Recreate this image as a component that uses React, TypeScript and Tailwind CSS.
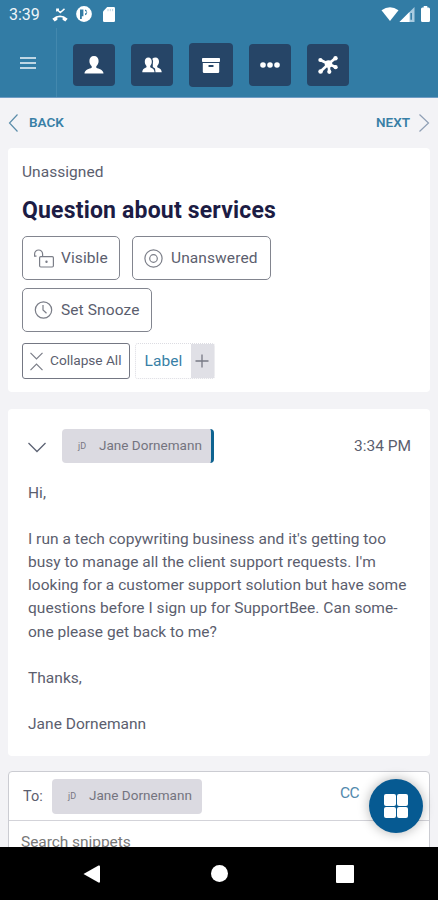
import type { ReactNode } from 'react';

const toolbar: { key: string; className: string; icon: ReactNode }[] = [
  { key: 'user', className: 'h-[42px] w-[42px]', icon: <UserIcon /> },
  { key: 'groups', className: 'h-[42px] w-[42px]', icon: <GroupIcon /> },
  { key: 'archive', className: 'h-11 w-11', icon: <ArchiveIcon /> },
  { key: 'more', className: 'h-[42px] w-[42px]', icon: <MoreIcon /> },
  { key: 'hub', className: 'h-[42px] w-[42px]', icon: <HubIcon /> },
];

const message = [
  'Hi,',
  '',
  "I run a tech copywriting business and it's getting too",
  "busy to manage all the client support requests. I'm",
  'looking for a customer support solution but have some',
  'questions before I sign up for SupportBee. Can some-',
  'one please get back to me?',
  '',
  'Thanks,',
  '',
  'Jane Dornemann',
];

export default function App() {
  return (
    <div className="flex h-[900px] w-[438px] flex-col overflow-hidden bg-[#f3f3f6] font-[Roboto,sans-serif] text-[#5b5e6e]">
      <header className="h-[98px] shrink-0 border-b border-[#6f9cc4] bg-[#327ca5]">
        <StatusBar />
        <div className="flex h-[69px]">
          <button className="flex w-[57px] items-center justify-center border-r border-[#4388ae]">
            <svg width="16" height="14" viewBox="0 0 16 14" className="mt-px" fill="none" stroke="#bfd6e4" strokeWidth="2">
              <path d="M0 2H16M0 7H16M0 12H16" />
            </svg>
          </button>
          <div className="flex items-center gap-4 pt-[5px] pl-4">
            {toolbar.map(item => (
              <button key={item.key} className={`flex items-center justify-center rounded-[4px] bg-[#264567] ${item.className}`}>
                {item.icon}
              </button>
            ))}
          </div>
        </div>
      </header>

      <main className="flex min-h-0 flex-1 flex-col overflow-hidden">
        <nav className="flex h-[50px] shrink-0 items-center justify-between px-2 text-[13.5px] font-semibold text-[#387fa6]">
          <button className="flex items-center gap-[10px]">
            <svg width="11" height="20" viewBox="0 0 11 20" fill="none" stroke="#5b8daa" strokeWidth="1.2">
              <path d="M9.5 1.5L1.5 10L9.5 18.5" />
            </svg>
            <span className="pb-[2px]">BACK</span>
          </button>
          <button className="flex items-center gap-[8px]">
            <span className="pb-[2px]">NEXT</span>
            <svg width="12" height="20" viewBox="0 0 12 20" fill="none" stroke="#8f9fb5" strokeWidth="1.2">
              <path d="M1.5 1.5L10.5 10L1.5 18.5" />
            </svg>
          </button>
        </nav>

        {/* Ticket summary */}
        <section className="mx-2 h-[244px] shrink-0 rounded-[4px] bg-white px-[14px] pt-[13px]">
          <p className="text-[15.5px] leading-[22px] tracking-[0.05px]">Unassigned</p>
          <h1 className="mt-[13px] text-[23px] leading-[30px] font-bold tracking-[0.18px] text-[#1c1c44]">Question about services</h1>
          <div className="mt-[10px] flex w-[300px] flex-wrap gap-x-3 gap-y-2 text-[15.5px] tracking-[0.1px]">
            <button className="flex h-11 w-[98px] items-center gap-[7px] rounded-[5px] border border-[#82858f] pl-[11px]">
              <UnlockIcon />
              <span className="pt-[2px]">Visible</span>
            </button>
            <button className="flex h-11 w-[139px] items-center gap-2 rounded-[5px] border border-[#82858f] pl-[11px]">
              <TargetIcon />
              <span className="pt-[2px]">Unanswered</span>
            </button>
            <button className="flex h-11 w-[130px] items-center gap-[7px] rounded-[5px] border border-[#82858f] pl-[10px]">
              <ClockIcon />
              <span className="pt-px">Set Snooze</span>
            </button>
          </div>
          <div className="mt-[11px] flex gap-[5px]">
            <button className="flex h-9 w-[108px] items-center gap-[7px] rounded-[3px] border border-[#747783] pl-[7px] text-[13.7px] tracking-[-0.03px]">
              <CollapseIcon />
              <span className="pb-px">Collapse All</span>
            </button>
            <div className="flex h-9 w-[80px] rounded-[3px] border border-dotted border-[#dcdce2]">
              <span className="flex w-[55px] items-center justify-center pt-[2px] text-[15.5px] tracking-[0.1px] text-[#387fa6]">Label</span>
              <span className="flex flex-1 items-center justify-center bg-[#e0e0e6]">
                <svg width="14" height="14" viewBox="0 0 14 14" className="-ml-px" stroke="#777985" strokeWidth="1.3">
                  <path d="M7 0.5V13.5M0.5 7H13.5" />
                </svg>
              </span>
            </div>
          </div>
        </section>

        {/* Message */}
        <section className="mx-2 mt-[17px] h-[347px] shrink-0 rounded-[4px] bg-white px-5 pt-5">
          <div className="flex items-center">
            <svg width="18" height="11" viewBox="0 0 18 11" className="mt-[3px] mr-4" fill="none" stroke="#5d6374" strokeWidth="1.3">
              <path d="M0.5 1L9 9.5L17.5 1" />
            </svg>
            <div className="flex h-[34px] w-[152px] items-center rounded-[4px] border-r-[3px] border-[#0e6390] bg-[#dbdae1]">
              <PersonChip />
            </div>
            <time className="mr-[-1px] ml-auto pt-[2px] text-[15.5px]">3:34 PM</time>
          </div>
          <div className="mt-[19px] text-[15.5px] leading-[23.1px] tracking-[0.03px] whitespace-nowrap">
            {message.map((line, i) => (
              <p key={i} className="h-[23.1px]">{line}</p>
            ))}
          </div>
        </section>

        {/* Reply box */}
        <section className="relative mx-2 mt-[15px] h-[120px] shrink-0 rounded-[4px] border border-[#cbccd2] bg-white">
          <div className="flex h-[49px] items-center border-b border-[#d3d3d9] pl-[14px]">
            <span className="w-[29px] pt-[2px] text-[14.5px]">To:</span>
            <div className="flex h-[35px] w-[150px] items-center rounded-[4px] bg-[#dbdae1]">
              <PersonChip />
            </div>
            <span className="mb-[5px] ml-[138px] text-[15.5px] tracking-[-0.5px] text-[#5289ad]">CC</span>
          </div>
          <p className="pt-[10px] pl-3 text-[15.5px] leading-[22px] tracking-[-0.05px] text-[#777]">Search snippets</p>
          <button className="absolute top-[7px] right-[6px] flex h-[54px] w-[54px] items-center justify-center rounded-full bg-[#065a92] shadow-[0_0_12px_rgba(0,0,0,0.3)]">
            <span className="grid grid-cols-2 gap-px">
              <i className="h-[11.5px] w-[11.5px] rounded-[2px] bg-white" />
              <i className="h-[11.5px] w-[11.5px] rounded-[2px] bg-white" />
              <i className="h-[11.5px] w-[11.5px] rounded-[2px] bg-white" />
              <i className="h-[11.5px] w-[11.5px] rounded-[2px] bg-white" />
            </span>
          </button>
        </section>
      </main>

      <footer className="flex h-[53px] shrink-0 items-center bg-black pl-[83px]">
        <svg width="17" height="18" viewBox="0 0 17 18" fill="#fff">
          <path d="M0.5 9L15.5 0.5Q17 0 17 1.5V16.5Q17 18 15.5 17.5Z" />
        </svg>
        <span className="ml-[111px] h-[17px] w-[17px] rounded-full bg-white" />
        <span className="ml-[108px] h-[18px] w-[18px] rounded-[1px] bg-white" />
      </footer>
    </div>
  );
}

function StatusBar() {
  return (
    <div className="flex h-7 items-center pl-[9px] text-[#eef5f9]">
      <span className="w-[43px] pt-px text-[16px] leading-none">3:39</span>
      {/* Missed call */}
      <svg width="16" height="14" viewBox="0 0 16 14" className="mt-px">
        <path d="M4.8 3.6V1.2H7M4.8 1.2L8.3 4.6L12.5 0.9" fill="none" stroke="#fff" strokeWidth="1.4" />
        <path d="M0.3 10.8Q8 4.4 15.7 10.8L13.3 13.5L10.6 11.8V9.5Q8 8.8 5.4 9.5V11.8L2.7 13.5Z" fill="#fff" />
      </svg>
      <svg width="16" height="16" viewBox="0 0 16 16" className="ml-2">
        <circle cx="8" cy="8" r="7.9" fill="#fff" />
        <path d="M4 3.6H7.4V10.2H5.8V13H4ZM9 3.4A3 3 0 0 1 9 9.2V7.3H10.4V5.3H9Z" fill="#327ca5" />
      </svg>
      <svg width="12" height="15" viewBox="0 0 12 15" className="ml-[11px]">
        <path d="M4.2 0H10.8Q12 0 12 1.2V13.8Q12 15 10.8 15H1.2Q0 15 0 13.8V4.4Z" fill="#fff" />
        <path d="M5 2V4.2M7.3 2V4.2M9.6 2V4.2" stroke="#a9c8da" strokeWidth="0.8" />
      </svg>
      <svg width="18" height="14" viewBox="0 0 18 14" className="ml-auto">
        <path d="M0.5 3.2Q9 -2.8 17.5 3.2L9 14Z" fill="#fff" />
      </svg>
      <svg width="16" height="15" viewBox="0 0 16 15">
        <path d="M0.5 15L15.5 0V15Z" fill="#a9cbe0" />
        <path d="M0.5 15L10.5 5V15Z" fill="#fff" />
        <path d="M12.2 6V12.8" stroke="#327ca5" strokeWidth="1.5" />
      </svg>
      <svg width="9" height="16" viewBox="0 0 10 16" preserveAspectRatio="none" className="mr-2 ml-[6px]">
        <path d="M3 0H7V1.5H8.5Q10 1.5 10 3V14.5Q10 16 8.5 16H1.5Q0 16 0 14.5V3Q0 1.5 1.5 1.5H3Z" fill="#fff" />
      </svg>
    </div>
  );
}

function PersonChip() {
  return (
    <>
      <span className="ml-4 w-[21px] text-[9px] leading-none text-[#777783]">jD</span>
      <span className="pb-px text-[13.5px] tracking-[0.02px] whitespace-nowrap text-[#74747f]">Jane Dornemann</span>
    </>
  );
}

function UserIcon() {
  return (
    <svg width="20" height="18" viewBox="0 0 20 18" fill="#fff">
      <path d="M10 0C13 0 14.6 2 14.6 5C14.6 7.4 13.6 9.2 12.3 10.2V11.8C14.5 13 19.5 13.6 19.5 17.6H0.5C0.5 13.6 5.5 13 7.7 11.8V10.2C6.4 9.2 5.4 7.4 5.4 5C5.4 2 7 0 10 0Z" />
    </svg>
  );
}

function GroupIcon() {
  return (
    <svg width="20" height="16" viewBox="0 0 20 16" fill="#fff">
      <path d="M13.5 0.5C15.8 0.5 17 2.2 17 4.5C17 6.5 16.3 7.9 15.2 8.9V10.2C16.7 11.2 19.7 11.6 19.7 15.3H13.5L13 11.5L10.8 10V7.5Q11.8 4 10.3 1.8Q11.5 0.5 13.5 0.5Z" />
      <path d="M6.3 0.5C8.6 0.5 9.8 2.2 9.8 4.5C9.8 6.5 9.2 7.9 8.2 8.9V10.2C9.7 11.2 12.5 11.6 12.5 15.3H0.3C0.3 11.6 3.1 11.2 4.5 10.2V8.9C3.4 7.9 2.8 6.5 2.8 4.5C2.8 2.2 4 0.5 6.3 0.5Z" />
    </svg>
  );
}

function ArchiveIcon() {
  return (
    <svg width="18" height="15" viewBox="0 0 18 15">
      <rect width="18" height="4" rx="0.8" fill="#fff" />
      <path d="M0.8 5H17.2V13.8Q17.2 15 16 15H2Q0.8 15 0.8 13.8Z" fill="#fff" />
      <rect x="6.5" y="7" width="5" height="2" rx="0.5" fill="#264567" />
    </svg>
  );
}

function MoreIcon() {
  return (
    <svg width="20" height="6" viewBox="0 0 20 6" fill="#fff">
      <circle cx="3" cy="3" r="2.8" />
      <circle cx="10" cy="3" r="2.8" />
      <circle cx="17" cy="3" r="2.8" />
    </svg>
  );
}

function HubIcon() {
  return (
    <svg width="20" height="18" viewBox="0 0 20 18" fill="#fff">
      <path d="M10.5 8L2.5 4M10.5 8L17.5 2M10.5 8L17.5 11M10.5 8L11.3 15.5M10.5 8L2.5 15.5" stroke="#fff" strokeWidth="2.6" />
      <circle cx="10.5" cy="8" r="3.8" />
      <circle cx="2.4" cy="4" r="2.1" />
      <circle cx="17.5" cy="2.3" r="2.2" />
      <circle cx="17.6" cy="11.2" r="2.1" />
      <circle cx="11.3" cy="15.8" r="2.1" />
      <circle cx="2.6" cy="15.5" r="2.3" />
    </svg>
  );
}

function UnlockIcon() {
  return (
    <svg width="20" height="19" viewBox="0 0 20 19" fill="none" stroke="#7b7e88" strokeWidth="1.2">
      <rect x="5.6" y="7.6" width="13.8" height="10.4" rx="1.2" />
      <path d="M8.6 7.6V5A4 4 0 0 0 0.6 5V7.2H2.5" />
      <circle cx="12.5" cy="12.8" r="0.6" fill="#7b7e88" />
    </svg>
  );
}

function TargetIcon() {
  return (
    <svg width="19" height="19" viewBox="0 0 19 19" fill="none" stroke="#7b7e88" strokeWidth="1.2">
      <circle cx="9.5" cy="9.5" r="8.6" />
      <circle cx="9.5" cy="9.5" r="3.8" />
    </svg>
  );
}

function ClockIcon() {
  return (
    <svg width="21" height="18" viewBox="0 0 21 18" fill="none" stroke="#7b7e88" strokeWidth="1.2">
      <circle cx="10.5" cy="9" r="8.2" />
      <path d="M10 4V9L13.5 12.3" />
    </svg>
  );
}

function CollapseIcon() {
  return (
    <svg width="13" height="19" viewBox="0 0 13 19" fill="none" stroke="#7b7e88" strokeWidth="1.2">
      <path d="M0.5 0.8L6.5 7L12.5 0.8M0.5 18.2L6.5 12L12.5 18.2" />
    </svg>
  );
}
